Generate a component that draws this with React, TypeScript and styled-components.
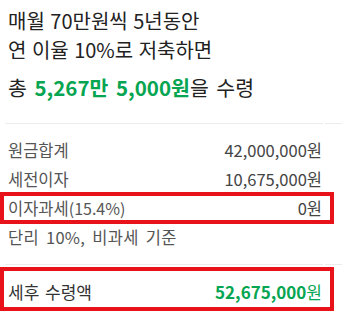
import React from 'react';
import styled, { createGlobalStyle } from 'styled-components';

const GlobalStyle = createGlobalStyle`
  html, body {
    margin: 0;
    padding: 0;
    background: #ffffff;
  }
  body {
    font-family: "Noto Sans CJK KR", "Noto Sans", sans-serif;
    color: #222222;
  }
`;

const Page = styled.div`
  width: 342px;
  padding: 6px 20px 0 5px;
  box-sizing: border-box;
`;

const Headline = styled.div`
  padding-left: 3px;
  font-size: 20px;
  line-height: 29px;
  color: #222222;
  word-spacing: 1px;
`;

const Total = styled.div`
  margin-top: 9px;
  padding-left: 3px;
  font-size: 20.5px;
  line-height: 29px;
  color: #222222;
  word-spacing: 3px;
`;

const Green = styled.strong`
  color: #06a551;
  font-weight: 700;
`;

const Divider = styled.div<{ $top: number }>`
  display: flex;
  gap: 2px;
  margin-right: -20px;
  margin-top: ${({ $top }) => $top}px;

  &::before {
    content: '';
    flex: 1;
    border-top: 1px solid #ececec;
  }
  &::after {
    content: '';
    width: 17px;
    border-top: 1px solid #ececec;
  }
`;

const List = styled.div`
  padding: 12px 0 0 3px;
  display: flex;
  flex-direction: column;
`;

const Row = styled.div<{ $mark?: boolean }>`
  position: relative;
  display: flex;
  justify-content: space-between;
  align-items: center;
  font-size: 16.5px;
  line-height: 29px;
  color: #555555;
  word-spacing: 2px;

  ${({ $mark }) =>
    $mark &&
    `
    &::after {
      content: '';
      position: absolute;
      top: -2px;
      bottom: -1px;
      left: -8px;
      right: -12px;
      border: 4px solid #e8121b;
      pointer-events: none;
    }
  `}
`;

const Note = styled.span`
  letter-spacing: 0.3px;
  word-spacing: 3px;
`;

const Small = styled.span`
  font-size: 16px;
`;

const Value = styled.span`
  color: #444444;
`;

const Final = styled.div`
  position: relative;
  margin-top: 2px;
  padding: 10px 0 5px 3px;

  &::after {
    content: '';
    position: absolute;
    top: 0;
    bottom: 0;
    left: -5px;
    right: -12px;
    border: 4px solid #e8121b;
    pointer-events: none;
  }
`;

const FinalRow = styled.div`
  display: flex;
  justify-content: space-between;
  align-items: center;
  font-size: 17px;
  line-height: 29px;
  color: #333333;
  word-spacing: 2px;
`;

const FinalValue = styled.span`
  color: #06a551;
`;

export default function App() {
  return (
    <>
      <GlobalStyle />
      <Page>
        <Headline>
          매월 70만원씩 5년동안
          <br />
          연 이율 10%로 저축하면
        </Headline>
        <Total>
          총 <Green>5,267만 5,000원</Green>을 수령
        </Total>
        <Divider $top={21} />
        <List>
          <Row>
            <span>원금합계</span>
            <Value>42,000,000원</Value>
          </Row>
          <Row>
            <span>세전이자</span>
            <Value>10,675,000원</Value>
          </Row>
          <Row $mark>
            <span>
              이자과세<Small>(15.4%)</Small>
            </span>
            <Value>0원</Value>
          </Row>
          <Row>
            <Note>단리 10%, 비과세 기준</Note>
          </Row>
        </List>
        <Divider $top={12} />
        <Final>
          <FinalRow>
            <span>세후 수령액</span>
            <FinalValue>
              <Green>52,675,000</Green>원
            </FinalValue>
          </FinalRow>
        </Final>
      </Page>
    </>
  );
}
